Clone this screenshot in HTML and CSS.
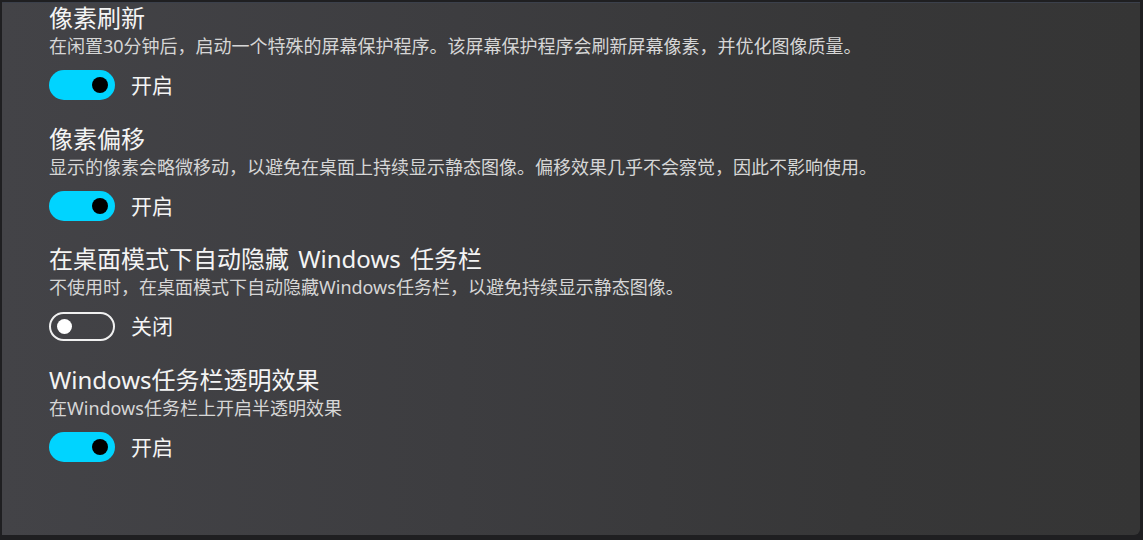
FILE: index.html
```html
<!DOCTYPE html>
<html lang="zh-CN">
<head>
<meta charset="utf-8">
<link rel="stylesheet" href="styles.css">
</head>
<body>
<div class="frame">
  <div class="panel">
    <section class="setting">
      <h2 class="title">像素刷新</h2>
      <p class="desc">在闲置30分钟后，启动一个特殊的屏幕保护程序。该屏幕保护程序会刷新屏幕像素，并优化图像质量。</p>
      <div class="toggle-row"><span class="toggle on"><span class="knob"></span></span><span class="state">开启</span></div>
    </section>
    <section class="setting">
      <h2 class="title">像素偏移</h2>
      <p class="desc">显示的像素会略微移动，以避免在桌面上持续显示静态图像。偏移效果几乎不会察觉，因此不影响使用。</p>
      <div class="toggle-row"><span class="toggle on"><span class="knob"></span></span><span class="state">开启</span></div>
    </section>
    <section class="setting">
      <h2 class="title">在桌面模式下自动隐藏 Windows 任务栏</h2>
      <p class="desc">不使用时，在桌面模式下自动隐藏Windows任务栏，以避免持续显示静态图像。</p>
      <div class="toggle-row"><span class="toggle off"><span class="knob"></span></span><span class="state">关闭</span></div>
    </section>
    <section class="setting">
      <h2 class="title">Windows任务栏透明效果</h2>
      <p class="desc">在Windows任务栏上开启半透明效果</p>
      <div class="toggle-row"><span class="toggle on"><span class="knob"></span></span><span class="state">开启</span></div>
    </section>
  </div>
</div>
</body>
</html>
```

FILE: styles.css
```css
* { box-sizing: border-box; }
html, body {
  margin: 0;
  padding: 0;
  width: 1143px;
  height: 540px;
  overflow: hidden;
  background: #1f1f21;
  font-family: "Noto Sans", "Noto Sans CJK SC", sans-serif;
}
.frame {
  width: 1143px;
  height: 540px;
  padding: 2px 3px 5px 2px;
}
.panel {
  height: 100%;
  border-top: 1px solid #3b404b;
  border-bottom-right-radius: 6px;
  background: linear-gradient(to right, #434347 0%, #3d3d40 40%, #373738 75%, #353535 100%);
  padding: 0 0 0 47px;
}
.setting {
  margin-bottom: 23.7px;
}
.title {
  margin: 0;
  font-size: 24px;
  line-height: 30px;
  font-weight: 400;
  word-spacing: 3px;
  color: #f4f4f4;
}
.desc {
  margin: 0;
  font-size: 18px;
  line-height: 26px;
  color: #d6d6d6;
}
.toggle-row {
  display: flex;
  align-items: center;
  gap: 16px;
  margin-top: 11px;
  height: 30px;
}
.toggle {
  position: relative;
  width: 66px;
  height: 30px;
  border-radius: 15px;
  display: flex;
  align-items: center;
}
.toggle.on {
  background: #00d4ff;
  justify-content: flex-end;
  padding-right: 7px;
}
.toggle.on .knob {
  width: 16px;
  height: 16px;
  border-radius: 50%;
  background: #000;
}
.toggle.off {
  border: 2px solid #f0f0f0;
  height: 29px;
  padding-left: 6px;
}
.toggle.off .knob {
  width: 15px;
  height: 15px;
  border-radius: 50%;
  background: #fff;
}
.state {
  font-size: 21px;
  color: #f4f4f4;
  line-height: 30px;
}
```
